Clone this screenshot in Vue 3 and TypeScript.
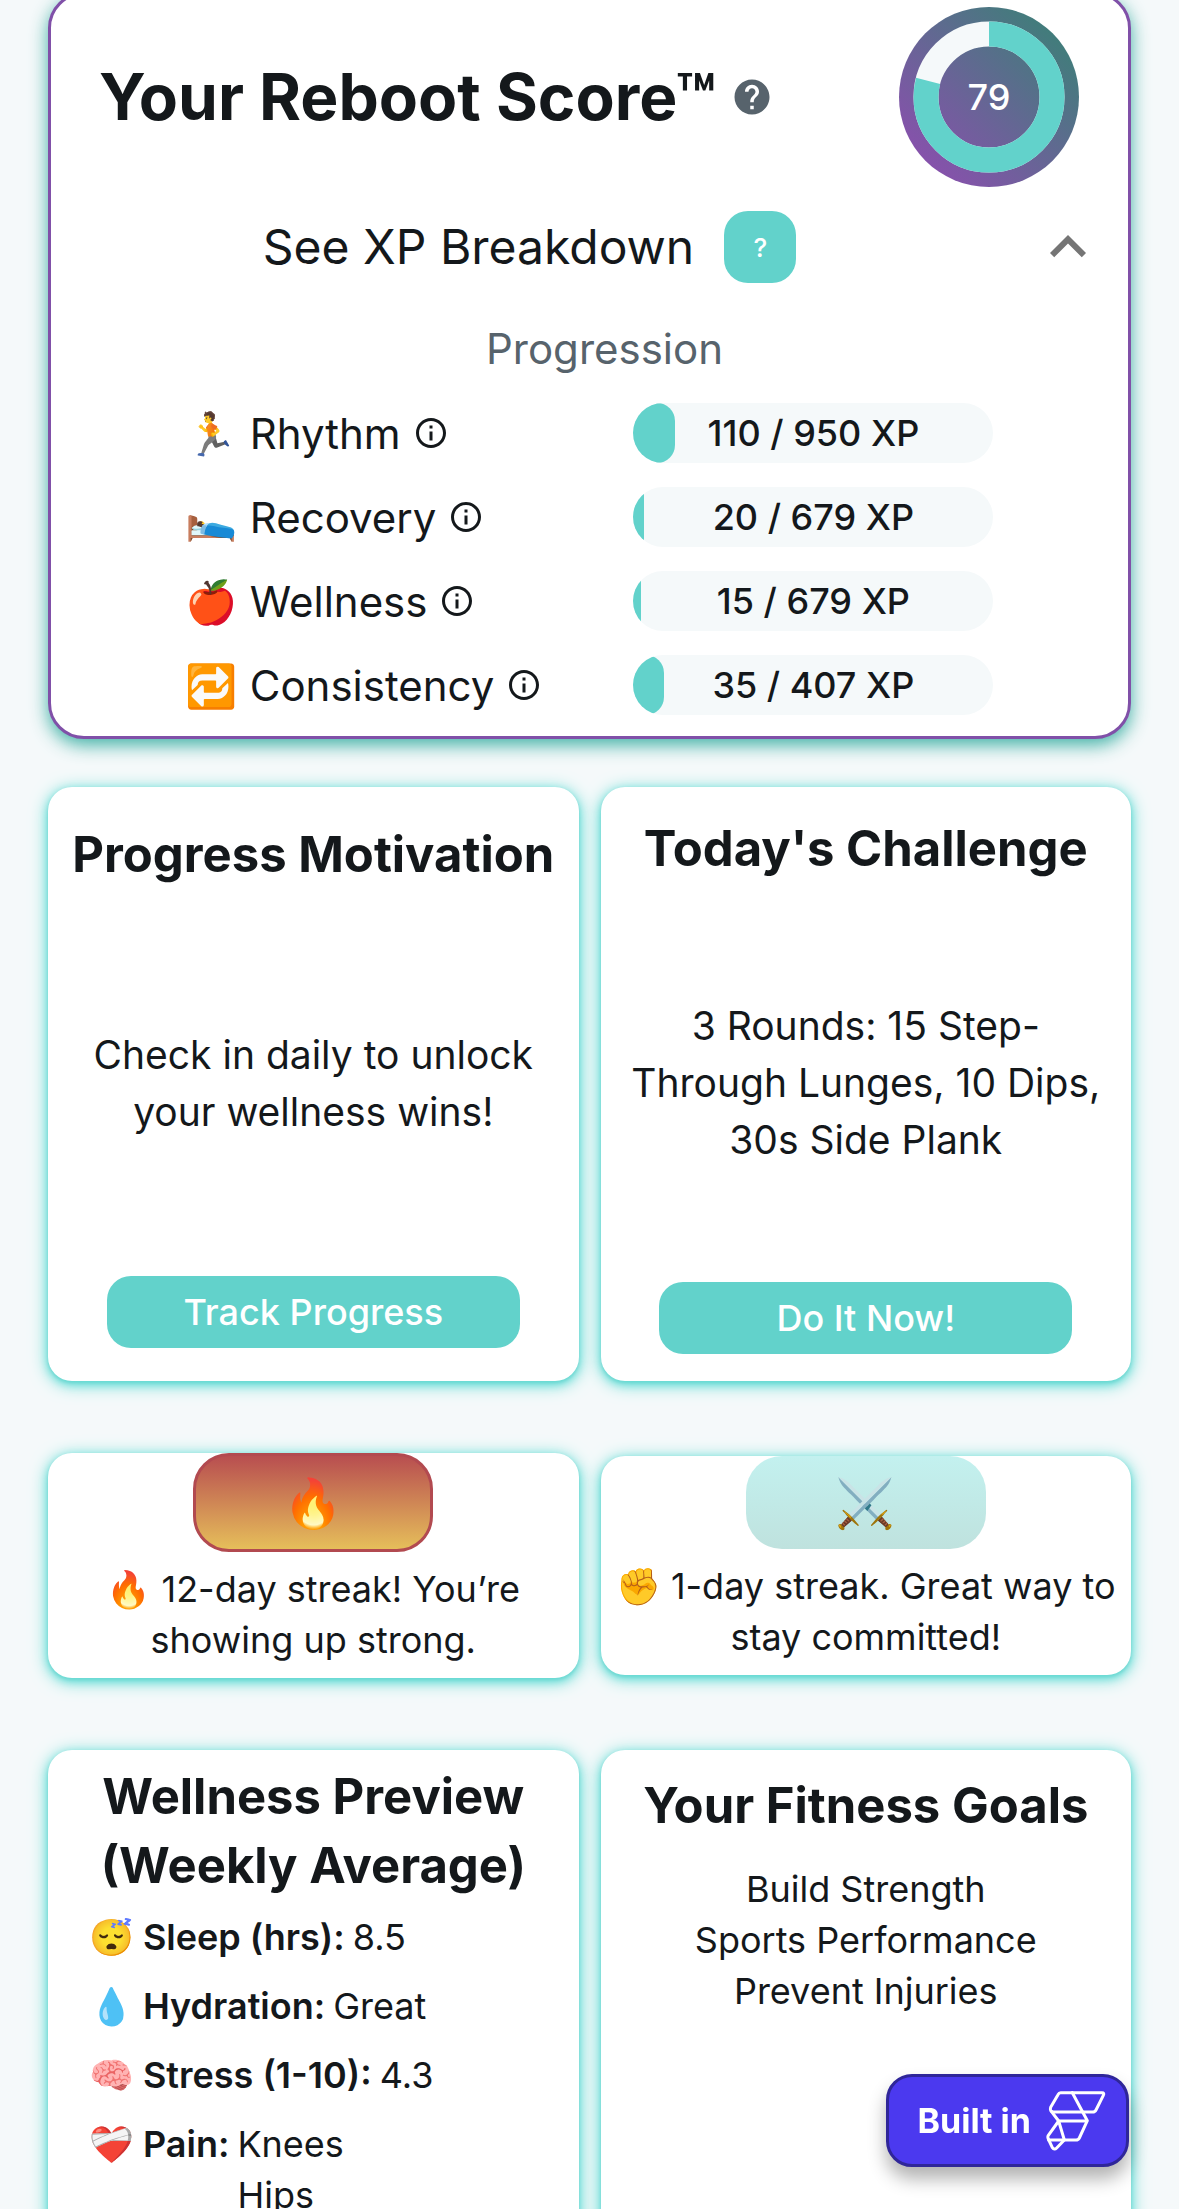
<script setup lang="ts">
import { computed, ref } from 'vue'

interface Track {
  icon: string
  name: string
  xp: number
  goal: number
}

interface Vital {
  icon: string
  label: string
  values: string[]
}

const score = 79
const expanded = ref(true)

const tracks: Track[] = [
  { icon: '🏃', name: 'Rhythm', xp: 110, goal: 950 },
  { icon: '🛌', name: 'Recovery', xp: 20, goal: 679 },
  { icon: '🍎', name: 'Wellness', xp: 15, goal: 679 },
  { icon: '🔁', name: 'Consistency', xp: 35, goal: 407 },
]

const vitals: Vital[] = [
  { icon: '😴', label: 'Sleep (hrs):', values: ['8.5'] },
  { icon: '💧', label: 'Hydration:', values: ['Great'] },
  { icon: '🧠', label: 'Stress (1-10):', values: ['4.3'] },
  { icon: '❤️‍🩹', label: 'Pain:', values: ['Knees', 'Hips'] },
]

const goals = ['Build Strength', 'Sports Performance', 'Prevent Injuries']

const percent = (t: Track) => (t.xp / t.goal) * 100

// Ring of radius 63 in a 180 unit box; the dash covers the scored share.
const ringLength = 2 * Math.PI * 63
const ringDash = computed(() => `${(ringLength * score) / 100} ${ringLength}`)
</script>

<template>
  <main class="page">
    <section class="score-card">
      <header class="score-head">
        <div class="score-title">
          <h1>Your Reboot Score™</h1>
          <button class="icon-button" type="button" aria-label="About the score">
            <svg width="42" height="42" viewBox="0 0 24 24" fill="#57636c">
              <path d="M12 2C6.48 2 2 6.48 2 12s4.48 10 10 10 10-4.48 10-10S17.52 2 12 2zm1 17h-2v-2h2v2zm2.07-7.75l-.9.92C13.45 12.9 13 13.5 13 15h-2v-.5c0-1.1.45-2.1 1.17-2.83l1.24-1.26c.37-.36.59-.86.59-1.41 0-1.1-.9-2-2-2s-2 .9-2 2H8c0-2.21 1.79-4 4-4s4 1.79 4 4c0 .88-.36 1.68-.93 2.25z" />
            </svg>
          </button>
        </div>
        <div class="dial">
          <svg class="dial-ring" viewBox="0 0 180 180" fill="none" stroke-width="25" aria-hidden="true">
            <circle cx="90" cy="90" r="63" stroke="#f5f9fa" />
            <circle cx="90" cy="90" r="63" stroke="#62d2cb" :stroke-dasharray="ringDash" transform="rotate(-90 90 90)" />
          </svg>
          <span class="dial-value">{{ score }}</span>
        </div>
      </header>

      <div class="breakdown-head">
        <div class="breakdown-title">
          <h2>See XP Breakdown</h2>
          <button class="help-button" type="button" aria-label="About XP">?</button>
        </div>
        <button class="icon-button" type="button" aria-label="Toggle breakdown" :aria-expanded="expanded" @click="expanded = !expanded">
          <svg width="72" height="72" viewBox="0 0 24 24" fill="#757575">
            <path :d="expanded ? 'M12 8l-6 6 1.41 1.41L12 10.83l4.59 4.58L18 14z' : 'M16.59 8.59L12 13.17 7.41 8.59 6 10l6 6 6-6z'" />
          </svg>
        </button>
      </div>

      <div v-if="expanded" class="breakdown">
        <h3>Progression</h3>
        <ul class="tracks">
          <li v-for="t in tracks" :key="t.name" class="track">
            <span class="track-name">{{ t.icon }} {{ t.name }}</span>
            <button class="icon-button" type="button" :aria-label="`About ${t.name}`">
              <svg width="36" height="36" viewBox="0 0 24 24" fill="#14181b">
                <path d="M11 7h2v2h-2zm0 4h2v6h-2zm1-9C6.48 2 2 6.48 2 12s4.48 10 10 10 10-4.48 10-10S17.52 2 12 2zm0 18c-4.41 0-8-3.59-8-8s3.59-8 8-8 8 3.59 8 8-3.59 8-8 8z" />
              </svg>
            </button>
            <div class="bar" role="progressbar" :aria-valuenow="t.xp" aria-valuemin="0" :aria-valuemax="t.goal">
              <div class="bar-fill" :class="{ rounded: percent(t) > 6 }" :style="{ width: percent(t) + '%' }"></div>
              <span class="bar-text">{{ t.xp }} / {{ t.goal }} XP</span>
            </div>
          </li>
        </ul>
      </div>
    </section>

    <div class="columns">
      <section class="card action-card roomy">
        <h2 class="card-title">Progress Motivation</h2>
        <p class="message">Check in daily to unlock your wellness wins!</p>
        <button class="action" type="button">Track Progress</button>
      </section>
      <section class="card action-card">
        <h2 class="card-title">Today's Challenge</h2>
        <p class="message">3 Rounds: 15 Step-Through Lunges, 10 Dips, 30s Side Plank</p>
        <button class="action" type="button">Do It Now!</button>
      </section>
    </div>

    <div class="columns streaks">
      <section class="card streak-card">
        <div class="medal fire">🔥</div>
        <p class="note">🔥 12-day streak! You’re showing up strong.</p>
      </section>
      <section class="card streak-card">
        <div class="medal swords">⚔️</div>
        <p class="note">✊ 1-day streak. Great way to stay committed!</p>
      </section>
    </div>

    <div class="columns">
      <section class="card wellness-card">
        <h2 class="card-title">Wellness Preview (Weekly Average)</h2>
        <dl class="vitals">
          <div v-for="v in vitals" :key="v.label" class="vital">
            <dt>{{ v.icon }} {{ v.label }}</dt>
            <dd><span v-for="value in v.values" :key="value">{{ value }}</span></dd>
          </div>
        </dl>
      </section>
      <section class="card goals-card">
        <h2 class="card-title">Your Fitness Goals</h2>
        <ul class="goals">
          <li v-for="g in goals" :key="g">{{ g }}</li>
        </ul>
      </section>
    </div>

    <a class="built-in" href="#">
      <span>Built in</span>
      <svg width="60" height="62" viewBox="0 0 180 186" fill="none" stroke="#fff" stroke-width="9" stroke-linejoin="round" stroke-linecap="round" aria-hidden="true">
        <path d="M44 8H168Q176 8 172 16L150 60Q147 66 140 66H22Q10 64 14 52L36 14Q39 8 44 8Z" />
        <path d="M79 8L124 92L100 144Q97 150 90 150H8" />
        <path d="M16 64L38 93H122" />
        <path d="M38 93L7 136Q4 141 7 147L19 173Q25 181 32 174L55 150Z" />
      </svg>
    </a>
  </main>
</template>

<style>
body {
  background: #f5f9fa;
}
</style>

<style scoped>
.page {
  box-sizing: border-box;
  height: 100vh;
  overflow: hidden;
  padding: 0 48px;
  background: #f5f9fa;
  color: #14181b;
  font-family: Inter, "Noto Color Emoji", sans-serif;
  font-size: 36px;
  line-height: 51px;
}

.page * {
  box-sizing: border-box;
}

h1,
h2,
h3,
p,
ul,
dl,
dd {
  margin: 0;
  padding: 0;
}

ul {
  list-style: none;
}

button {
  border: 0;
  padding: 0;
  font-family: inherit;
  cursor: pointer;
}

.icon-button {
  display: flex;
  background: none;
}

.score-card {
  margin-top: -8px;
  padding: 12px 0 21px;
  border: 3px solid #8050a8;
  border-radius: 36px;
  background: #fff;
  box-shadow: 0 6px 18px rgba(44, 168, 156, 0.9);
}

.score-head {
  display: flex;
  align-items: center;
  justify-content: space-between;
  padding: 0 49px 0 48px;
}

.score-title {
  display: flex;
  align-items: center;
  gap: 15px;
}

h1 {
  font-size: 64px;
  line-height: 84px;
  font-weight: 700;
}

.dial {
  display: grid;
  place-items: center;
  width: 180px;
  height: 180px;
  border-radius: 50%;
  background: linear-gradient(45deg, #8a4fae 10%, #3d7f78 90%);
}

.dial-ring,
.dial-value {
  grid-area: 1 / 1;
}

.dial-value {
  color: #fff;
  font-weight: 500;
}

.breakdown-head {
  display: flex;
  align-items: center;
  gap: 24px;
  margin-top: 24px;
  padding-right: 24px;
}

.breakdown-title {
  display: flex;
  flex: 1;
  align-items: center;
  justify-content: center;
  gap: 30px;
}

.breakdown-title h2 {
  font-size: 48px;
  line-height: 72px;
  font-weight: 400;
}

.help-button {
  width: 72px;
  height: 72px;
  border-radius: 24px;
  background: #62d2cb;
  color: #fff;
  font-size: 26px;
  font-weight: 500;
}

.breakdown h3 {
  margin: 42px 0 30px;
  padding-left: 30px;
  color: #57636c;
  font-size: 42px;
  line-height: 48px;
  font-weight: 400;
  text-align: center;
}

.tracks {
  display: flex;
  flex-direction: column;
  gap: 24px;
  width: 75%;
  margin: 0 auto;
}

.track {
  display: flex;
  align-items: center;
  gap: 12px;
  height: 60px;
}

.track-name {
  font-size: 42px;
}

.bar {
  display: grid;
  width: 360px;
  height: 60px;
  margin-left: auto;
  border-radius: 30px;
  overflow: hidden;
  background: #f5f9fa;
}

.bar-fill,
.bar-text {
  grid-area: 1 / 1;
}

.bar-fill {
  background: #62d2cb;
}

.bar-fill.rounded {
  border-radius: 0 18px 18px 0;
}

.bar-text {
  place-self: center;
  font-weight: 500;
}

.columns {
  display: grid;
  grid-template-columns: 1fr 1fr;
  gap: 22px;
  margin-top: 48px;
}

.streaks {
  align-items: center;
  margin: 72px 0;
}

.card {
  display: flex;
  flex-direction: column;
  align-items: center;
  border-radius: 24px;
  background: #fff;
  box-shadow: 0 3px 18px #5fdcd5, 0 3px 9px rgba(95, 220, 213, 0.8), 0 2px 3px rgba(50, 150, 145, 0.4);
  text-align: center;
}

.card-title {
  font-size: 49px;
  line-height: 69px;
  font-weight: 700;
}

.action-card {
  justify-content: space-between;
  min-height: 594px;
  padding: 27px 24px;
}

.roomy {
  padding-top: 33px;
  padding-bottom: 33px;
}

.action-card .card-title {
  margin: 0 -12px;
}

.message {
  font-size: 39px;
  line-height: 57px;
}

.action {
  width: 413px;
  max-width: 100%;
  height: 72px;
  border-radius: 24px;
  background: #62d2cb;
  color: #fff;
  font-size: 36px;
  font-weight: 500;
}

.streak-card {
  padding: 0 12px 12px;
}

.medal {
  display: grid;
  place-items: center;
  width: 240px;
  height: 93px;
  border-radius: 36px;
  font-size: 48px;
}

.fire {
  height: 99px;
  border: 3px solid #b24a50;
  background: linear-gradient(#b84e50, #e6be5a);
}

.swords {
  background: linear-gradient(#c3f1ef, #bfe2de);
}

.note {
  margin-top: 12px;
}

.wellness-card {
  padding: 12px 41px 48px;
}

.vitals {
  display: flex;
  flex-direction: column;
  align-self: stretch;
  gap: 18px;
  margin-top: 12px;
}

.vital {
  display: flex;
  gap: 8px;
  text-align: left;
}

.vital dt {
  font-weight: 600;
}

.vital dd {
  display: flex;
  flex-direction: column;
}

.goals-card {
  padding: 21px 24px 48px;
}

.goals {
  margin-top: 24px;
}

.streaks + .columns {
  margin-top: 0;
}

.built-in {
  position: fixed;
  right: 50px;
  bottom: 42px;
  display: flex;
  align-items: center;
  gap: 15px;
  height: 93px;
  padding: 0 20px 0 29px;
  border: 3px solid #2f2699;
  border-radius: 26px;
  background: #4b39ef;
  box-shadow: 0 12px 18px rgba(0, 0, 0, 0.3);
  color: #fff;
  font-size: 34px;
  font-weight: 700;
  text-decoration: none;
}
</style>
